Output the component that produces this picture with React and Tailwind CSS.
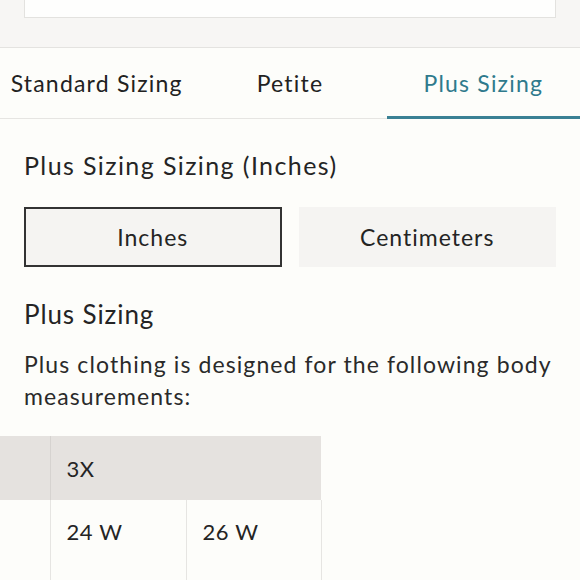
import { useState } from "react";

const tabs = ["Standard Sizing", "Petite", "Plus Sizing"];

const SizeTabs = ({ active, onChange }) => (
  <div className="grid grid-cols-3 h-[71px] border-b border-[#e6e5e2]">
    {tabs.map((t, i) => (
      <button
        key={t}
        onClick={() => onChange(i)}
        className={`relative flex items-center justify-center text-[23px] tracking-[1.2px] ${
          active === i ? "text-[#2f7a8c]" : "text-[#222]"
        }`}
      >
        {t}
        {active === i && (
          <span className="absolute left-0 right-0 -bottom-px h-[3px] bg-[#3a8194]" />
        )}
      </button>
    ))}
  </div>
);

export default function App() {
  const [tab, setTab] = useState(2);
  const [unit, setUnit] = useState("in");

  return (
    <div
      className="min-h-[580px] bg-[#fdfdfa] text-[#242424] overflow-hidden"
      style={{ fontFamily: "Lato, 'Noto Sans', sans-serif" }}
    >
      {/* search / top box area */}
      <div className="bg-[#f7f6f4] px-6 pb-[29px] border-b border-[#e4e3e0]">
        <div className="h-[18px] bg-[#fefefd] border-x border-b border-[#e3e2df]" />
      </div>

      <SizeTabs active={tab} onChange={setTab} />

      <div className="px-6">
        <h2 className="mt-[31px] text-[25px] tracking-[1.4px] leading-[30px]">
          Plus Sizing Sizing (Inches)
        </h2>

        <div className="mt-[27px] grid grid-cols-2 gap-[17px]">
          <button
            onClick={() => setUnit("in")}
            className={`h-[60px] bg-[#f5f4f2] text-[23px] tracking-[1px] border-2 ${
              unit === "in" ? "border-[#333]" : "border-transparent"
            }`}
          >
            Inches
          </button>
          <button
            onClick={() => setUnit("cm")}
            className={`h-[60px] bg-[#f5f4f2] text-[23px] tracking-[1px] border-2 ${
              unit === "cm" ? "border-[#333]" : "border-transparent"
            }`}
          >
            Centimeters
          </button>
        </div>

        <h3 className="mt-[31px] text-[26px] tracking-[0.9px] leading-[32px]">Plus Sizing</h3>
        <p className="mt-[18px] text-[23px] tracking-[1.1px] leading-[32px] text-[#2a2a2a]">
          Plus clothing is designed for the following body measurements:
        </p>
      </div>

      <table className="mt-[24px] border-collapse text-[22px] tracking-[0.6px]">
        <thead>
          <tr className="bg-[#e5e2df] h-[64px]">
            <th className="w-[50px] border-r border-[#d6d3d0]" />
            <th colSpan={2} className="text-left font-normal pl-4">
              3X
            </th>
          </tr>
        </thead>
        <tbody>
          <tr className="h-[90px] align-top">
            <td className="border-r border-[#e6e5e2]" />
            <td className="w-[136px] pl-4 pt-[15px] border-r border-[#e6e5e2]">24 W</td>
            <td className="w-[135px] pl-4 pt-[15px] border-r border-[#e6e5e2]">26 W</td>
          </tr>
        </tbody>
      </table>
    </div>
  );
}
